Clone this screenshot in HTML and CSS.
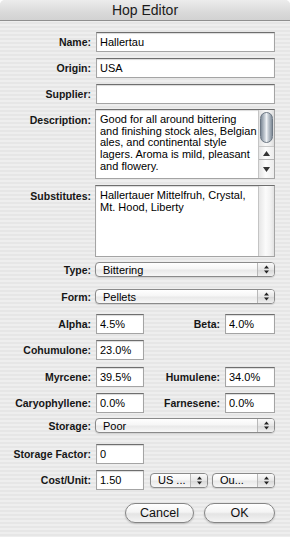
FILE: index.html
```html
<!DOCTYPE html>
<html lang="en">
<head>
    <meta charset="UTF-8">
    <meta name="viewport" content="width=device-width, initial-scale=1.0">
    <title>Hop Editor</title>
    <link rel="stylesheet" href="styles.css">
</head>
<body>
    <div class="window">
        <div class="titlebar">Hop Editor</div>

        <div class="form">
            <div class="row first">
                <label class="label">Name:</label>
                <input class="text wide" type="text" value="Hallertau">
            </div>
            <div class="row">
                <label class="label">Origin:</label>
                <input class="text wide" type="text" value="USA">
            </div>
            <div class="row">
                <label class="label">Supplier:</label>
                <input class="text wide" type="text" value="">
            </div>

            <!-- Multi-line fields -->
            <div class="row top gap-5">
                <label class="label">Description:</label>
                <div class="textbox wide desc">
                    <div class="textbox-body">Good for all around bittering<br>and finishing stock ales, Belgian<br>ales, and continental style<br>lagers. Aroma is mild, pleasant<br>and flowery.</div>
                    <div class="scrollbar">
                        <div class="thumb"></div>
                        <div class="track-space"></div>
                        <div class="arrow up">
                            <svg width="7" height="5" viewBox="0 0 7 5"><polygon points="3.5,0 7,5 0,5" fill="#333"/></svg>
                        </div>
                        <div class="arrow down">
                            <svg width="7" height="5" viewBox="0 0 7 5"><polygon points="0,0 7,0 3.5,5" fill="#333"/></svg>
                        </div>
                    </div>
                </div>
            </div>
            <div class="row top">
                <label class="label">Substitutes:</label>
                <div class="textbox wide subs">
                    <div class="textbox-body">Hallertauer Mittelfruh, Crystal,<br>Mt. Hood, Liberty</div>
                    <div class="scrollbar empty"></div>
                </div>
            </div>

            <!-- Popups -->
            <div class="row popup-row gap-5">
                <label class="label">Type:</label>
                <div class="popup wide">
                    <span class="popup-text">Bittering</span>
                    <span class="popup-arrows"><svg width="7" height="9" viewBox="0 0 7 9"><polygon points="3.5,0.5 6,3.5 1,3.5" fill="#222"/><polygon points="1,5.5 6,5.5 3.5,8.5" fill="#222"/></svg></span>
                </div>
            </div>
            <div class="row popup-row gap-12">
                <label class="label">Form:</label>
                <div class="popup wide">
                    <span class="popup-text">Pellets</span>
                    <span class="popup-arrows"><svg width="7" height="9" viewBox="0 0 7 9"><polygon points="3.5,0.5 6,3.5 1,3.5" fill="#222"/><polygon points="1,5.5 6,5.5 3.5,8.5" fill="#222"/></svg></span>
                </div>
            </div>

            <!-- Acids and oils -->
            <div class="row gap-10">
                <label class="label">Alpha:</label>
                <input class="text" type="text" value="4.5%">
                <label class="label">Beta:</label>
                <input class="text" type="text" value="4.0%">
            </div>
            <div class="row">
                <label class="label">Cohumulone:</label>
                <input class="text" type="text" value="23.0%">
            </div>
            <div class="row gap-7">
                <label class="label">Myrcene:</label>
                <input class="text" type="text" value="39.5%">
                <label class="label">Humulene:</label>
                <input class="text" type="text" value="34.0%">
            </div>
            <div class="row">
                <label class="label">Caryophyllene:</label>
                <input class="text" type="text" value="0.0%">
                <label class="label">Farnesene:</label>
                <input class="text" type="text" value="0.0%">
            </div>

            <div class="row popup-row gap-5">
                <label class="label">Storage:</label>
                <div class="popup wide">
                    <span class="popup-text">Poor</span>
                    <span class="popup-arrows"><svg width="7" height="9" viewBox="0 0 7 9"><polygon points="3.5,0.5 6,3.5 1,3.5" fill="#222"/><polygon points="1,5.5 6,5.5 3.5,8.5" fill="#222"/></svg></span>
                </div>
            </div>
            <div class="row gap-11">
                <label class="label">Storage Factor:</label>
                <input class="text" type="text" value="0">
            </div>
            <div class="row">
                <label class="label">Cost/Unit:</label>
                <input class="text" type="text" value="1.50">
                <div class="unit-popups">
                    <div class="popup currency">
                        <span class="popup-text">US ...</span>
                        <span class="popup-arrows"><svg width="7" height="9" viewBox="0 0 7 9"><polygon points="3.5,0.5 6,3.5 1,3.5" fill="#222"/><polygon points="1,5.5 6,5.5 3.5,8.5" fill="#222"/></svg></span>
                    </div>
                    <div class="popup measure">
                        <span class="popup-text">Ou...</span>
                        <span class="popup-arrows"><svg width="7" height="9" viewBox="0 0 7 9"><polygon points="3.5,0.5 6,3.5 1,3.5" fill="#222"/><polygon points="1,5.5 6,5.5 3.5,8.5" fill="#222"/></svg></span>
                    </div>
                </div>
            </div>

            <div class="buttons">
                <button class="btn cancel" type="button">Cancel</button>
                <button class="btn ok" type="button">OK</button>
            </div>
        </div>
    </div>
</body>
</html>
```
FILE: styles.css
```css
/* Global Settings */
* {
    box-sizing: border-box;
    margin: 0;
    padding: 0;
}

body {
    background-color: #fff;
    font-family: 'Liberation Sans', Arial, sans-serif;
    color: #111;
}

.window {
    width: 290px;
    height: 537px;
    border-radius: 5px 5px 0 0;
    overflow: hidden;
    background: repeating-linear-gradient(to bottom, #eeeeee 0, #eeeeee 2px, #e6e6e6 2px, #e6e6e6 4px);
}

/* Title bar */
.titlebar {
    height: 21px;
    line-height: 20px;
    text-align: center;
    font-size: 14px;
    color: #1a1a1a;
    background: linear-gradient(to bottom, #ececec, #dadada 60%, #d2d2d2);
    border-bottom: 1px solid #8f8f8f;
}

/* Form rows */
.form {
    padding-right: 15px;
}

.row {
    display: grid;
    grid-template-columns: 91px 48px 71px 50px;
    column-gap: 5px;
    align-items: center;
    margin-top: 6px;
}

.row.first { margin-top: 11px; }
.row.gap-5 { margin-top: 5px; }
.row.gap-7 { margin-top: 7px; }
.row.gap-10 { margin-top: 10px; }
.row.gap-11 { margin-top: 11px; }
.row.gap-12 { margin-top: 12px; }

.row.top {
    align-items: start;
}

.row.top .label {
    padding-top: 5px;
}

.label {
    text-align: right;
    font-size: 10.5px;
    font-weight: bold;
    line-height: 12px;
    color: #161616;
    white-space: nowrap;
}

.wide {
    grid-column: 2 / -1;
}

.text {
    height: 20px;
    width: 100%;
    padding: 0 3px;
    border: 1px solid #a4a4a4;
    border-top-color: #6e6e6e;
    box-shadow: inset 0 1px 1px rgba(0, 0, 0, 0.15);
    background-color: #fff;
    font-family: 'Liberation Sans', Arial, sans-serif;
    font-size: 11px;
    color: #000;
    outline: none;
}

/* Text areas */
.textbox {
    display: flex;
    margin-left: -1px;
    background-color: #fff;
    border: 1px solid #a4a4a4;
    border-top-color: #6e6e6e;
    box-shadow: inset 0 1px 1px rgba(0, 0, 0, 0.15);
}

.textbox.desc { height: 70px; }
.textbox.subs { height: 72px; }

.textbox-body {
    flex: 1;
    padding: 4px 0 0 4px;
    font-size: 11px;
    line-height: 11.7px;
    color: #000;
    white-space: nowrap;
    overflow: hidden;
}

.scrollbar {
    width: 16px;
    display: flex;
    flex-direction: column;
    border-left: 1px solid #c4c4c4;
    background: linear-gradient(to right, #e2e2e2, #f8f8f8 45%, #ececec 80%, #dcdcdc);
}

.scrollbar.empty {
    background: linear-gradient(to right, #e6e6e6, #fbfbfb 45%, #f0f0f0 80%, #e2e2e2);
}

.thumb {
    height: 31px;
    margin: 2px 1px 0 1px;
    border-radius: 7px;
    border: 1px solid #6d7884;
    background: linear-gradient(to right, #7f8b98, #c9d0d7 35%, #eef1f4 50%, #bcc4cc 70%, #808c99);
}

.track-space {
    flex: 1;
}

.arrow {
    display: flex;
    justify-content: center;
    align-items: center;
    background: linear-gradient(to right, #e4e4e4, #fcfcfc 45%, #ececec);
}

.arrow.up {
    height: 13px;
    border-top: 1px solid #c8c8c8;
}

.arrow.down {
    height: 19px;
    border-top: 1px solid #b4b4b4;
}

/* Popup buttons */
.popup {
    display: flex;
    align-items: center;
    height: 15px;
    margin-left: -1px;
    border: 1px solid #8a8a8a;
    border-radius: 4px;
    background: linear-gradient(to bottom, #ffffff, #f6f6f6 45%, #e9e9e9 55%, #f7f7f7);
    box-shadow: 0 1px 1px rgba(0, 0, 0, 0.12);
    overflow: hidden;
}

.popup-text {
    flex: 1;
    padding-left: 7px;
    font-size: 11px;
    color: #000;
    white-space: nowrap;
    overflow: hidden;
}

.popup-arrows {
    width: 17px;
    height: 100%;
    display: flex;
    justify-content: center;
    align-items: center;
    border-left: 1px solid #b8b8b8;
    background: linear-gradient(to bottom, #fafafa, #e6e6e6 50%, #d8d8d8 55%, #efefef);
}

.unit-popups {
    grid-column: 3 / -1;
    display: flex;
    gap: 4px;
    padding-left: 1px;
}

.popup.currency {
    width: 58px;
    margin-left: 0;
}

.popup.measure {
    flex: 1;
    margin-left: 0;
}

/* Buttons */
.buttons {
    display: flex;
    justify-content: flex-end;
    gap: 10px;
    margin-top: 13px;
}

.btn {
    height: 20px;
    border: 1px solid #858585;
    border-radius: 10px;
    background: linear-gradient(to bottom, #ffffff, #f4f4f4 45%, #e4e4e4 55%, #f4f4f4);
    box-shadow: 0 1px 2px rgba(0, 0, 0, 0.2);
    font-family: 'Liberation Sans', Arial, sans-serif;
    font-size: 12.5px;
    color: #111;
    cursor: pointer;
}

.btn.cancel { width: 69px; }
.btn.ok { width: 71px; }
```
